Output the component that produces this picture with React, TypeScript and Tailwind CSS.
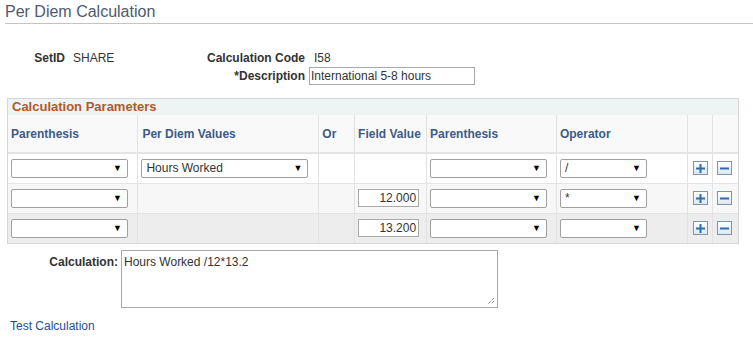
import React from "react";

const font = { fontFamily: '"Liberation Sans", Arial, sans-serif' };

function Select({ value = "", width }: { value?: string; width: string }) {
    return (
        <div className={`${width} h-[19px] flex items-center justify-between border border-[#a0a0a0] rounded-[2px] bg-white pl-[4px] pr-[5px] text-[12px] text-[#333]`}>
            <span>{value}</span>
            <span className="text-[9px] text-black leading-none">▼</span>
        </div>
    );
}

function NumInput({ value }: { value: string }) {
    return (
        <div className="w-[61px] h-[18px] border border-[#a9a9a9] bg-white text-right pr-[2px] text-[12px] leading-[16px] text-[#333]">
            {value}
        </div>
    );
}

function IconButton({ kind }: { kind: "plus" | "minus" }) {
    return (
        <div className="w-[15px] h-[14px] border border-[#7f97a5] bg-gradient-to-b from-white to-[#dde8ee] flex items-center justify-center">
            <svg width="9" height="9" viewBox="0 0 9 9">
                <rect x="0" y="3.5" width="9" height="2" fill="#2f6db3" />
                {kind === "plus" && <rect x="3.5" y="0" width="2" height="9" fill="#2f6db3" />}
            </svg>
        </div>
    );
}

const rows = [
    { bg: "bg-white", pd: "Hours Worked", fv: "", op: "/" },
    { bg: "bg-[#f7f7f7]", pd: null, fv: "12.000", op: "*" },
    { bg: "bg-[#ededed]", pd: null, fv: "13.200", op: "" },
];

export default function App() {
    return (
        <div className="w-[753px] h-[339px] bg-white overflow-hidden text-[#333]" style={font}>
            {/* Title */}
            <div className="pl-[5px] pt-[3px] h-[23px] text-[16px] text-[#4e5a6d] leading-[18px]">Per Diem Calculation</div>
            <div className="ml-[5px] h-px bg-[#c4c4c4]" />

            {/* Key fields */}
            <div className="flex mt-[25px] text-[12px]">
                <div className="w-[73px] text-right pr-[8px] font-bold text-[#333]">SetID</div>
                <div className="w-[100px]">SHARE</div>
                <div className="flex flex-col">
                    <div className="flex">
                        <div className="w-[136px] text-right pr-[4px] font-bold">Calculation Code</div>
                        <div className="pl-[5px]">I58</div>
                    </div>
                    <div className="flex items-center">
                        <div className="w-[136px] text-right pr-[4px] font-bold">*Description</div>
                        <div className="w-[166px] h-[18px] border border-[#a9a9a9] pl-[1px] leading-[16px]">International 5-8 hours</div>
                    </div>
                </div>
            </div>

            {/* Grid */}
            <div className="ml-[7px] mt-[13px] w-[732px] border border-[#d6d6d6]">
                <div className="h-[16px] bg-[#eef3f4] pl-[4px] text-[13px] font-bold text-[#b2592a] leading-[16px]">Calculation Parameters</div>
                <table className="border-collapse text-[12px] table-fixed">
                    <colgroup>
                        <col className="w-[130px]" />
                        <col className="w-[181px]" />
                        <col className="w-[36px]" />
                        <col className="w-[72px]" />
                        <col className="w-[130px]" />
                        <col className="w-[131px]" />
                        <col className="w-[25px]" />
                        <col className="w-[26px]" />
                    </colgroup>
                    <thead>
                        <tr className="h-[38px] bg-[#f9f9f9] border-b-2 border-[#e4e4e4] text-[#3e5b83] font-bold text-left">
                            <th className="pl-[3px] border-r border-[#e2e2e2]">Parenthesis</th>
                            <th className="pl-[4px] border-r border-[#e2e2e2]">Per Diem Values</th>
                            <th className="pl-[3px] border-r border-[#e2e2e2]">Or</th>
                            <th className="pl-[3px] border-r border-[#e2e2e2]">Field Value</th>
                            <th className="pl-[3px] border-r border-[#e2e2e2]">Parenthesis</th>
                            <th className="pl-[3px] border-r border-[#e2e2e2]">Operator</th>
                            <th className="border-r border-[#e2e2e2]"></th>
                            <th></th>
                        </tr>
                    </thead>
                    <tbody>
                        {rows.map((r, i) => (
                            <tr key={i} className={`h-[30px] ${r.bg} ${i < 2 ? "border-b border-[#e4e4e4]" : ""}`}>
                                <td className="pl-[3px] border-r border-[#e2e2e2]"><Select width="w-[117px]" /></td>
                                <td className="pl-[3px] border-r border-[#e2e2e2]">{r.pd !== null && <Select width="w-[167px]" value={r.pd} />}</td>
                                <td className="border-r border-[#e2e2e2]"></td>
                                <td className="pl-[3px] border-r border-[#e2e2e2]">{r.fv && <NumInput value={r.fv} />}</td>
                                <td className="pl-[3px] border-r border-[#e2e2e2]"><Select width="w-[117px]" /></td>
                                <td className="pl-[3px] border-r border-[#e2e2e2]"><Select width="w-[87px]" value={r.op} /></td>
                                <td className="pl-[5px] border-r border-[#e2e2e2]"><IconButton kind="plus" /></td>
                                <td className="pl-[4px]"><IconButton kind="minus" /></td>
                            </tr>
                        ))}
                    </tbody>
                </table>
            </div>

            {/* Calculation text */}
            <div className="flex mt-[6px] text-[12px]">
                <div className="w-[121px] text-right pr-[3px] font-bold pt-[3px]">Calculation:</div>
                <div className="relative w-[377px] h-[58px] border border-[#a9a9a9] pl-[2px] pt-[2px]">
                    Hours Worked /12*13.2
                    <svg className="absolute right-[2px] bottom-[2px]" width="8" height="8" viewBox="0 0 8 8">
                        <path d="M7 1 L1 7 M7 4 L4 7" stroke="#555" strokeWidth="1" strokeDasharray="1 1" />
                    </svg>
                </div>
            </div>

            <div className="pl-[10px] mt-[9px] text-[12px] text-[#1d4e8f]">Test Calculation</div>
        </div>
    );
}
